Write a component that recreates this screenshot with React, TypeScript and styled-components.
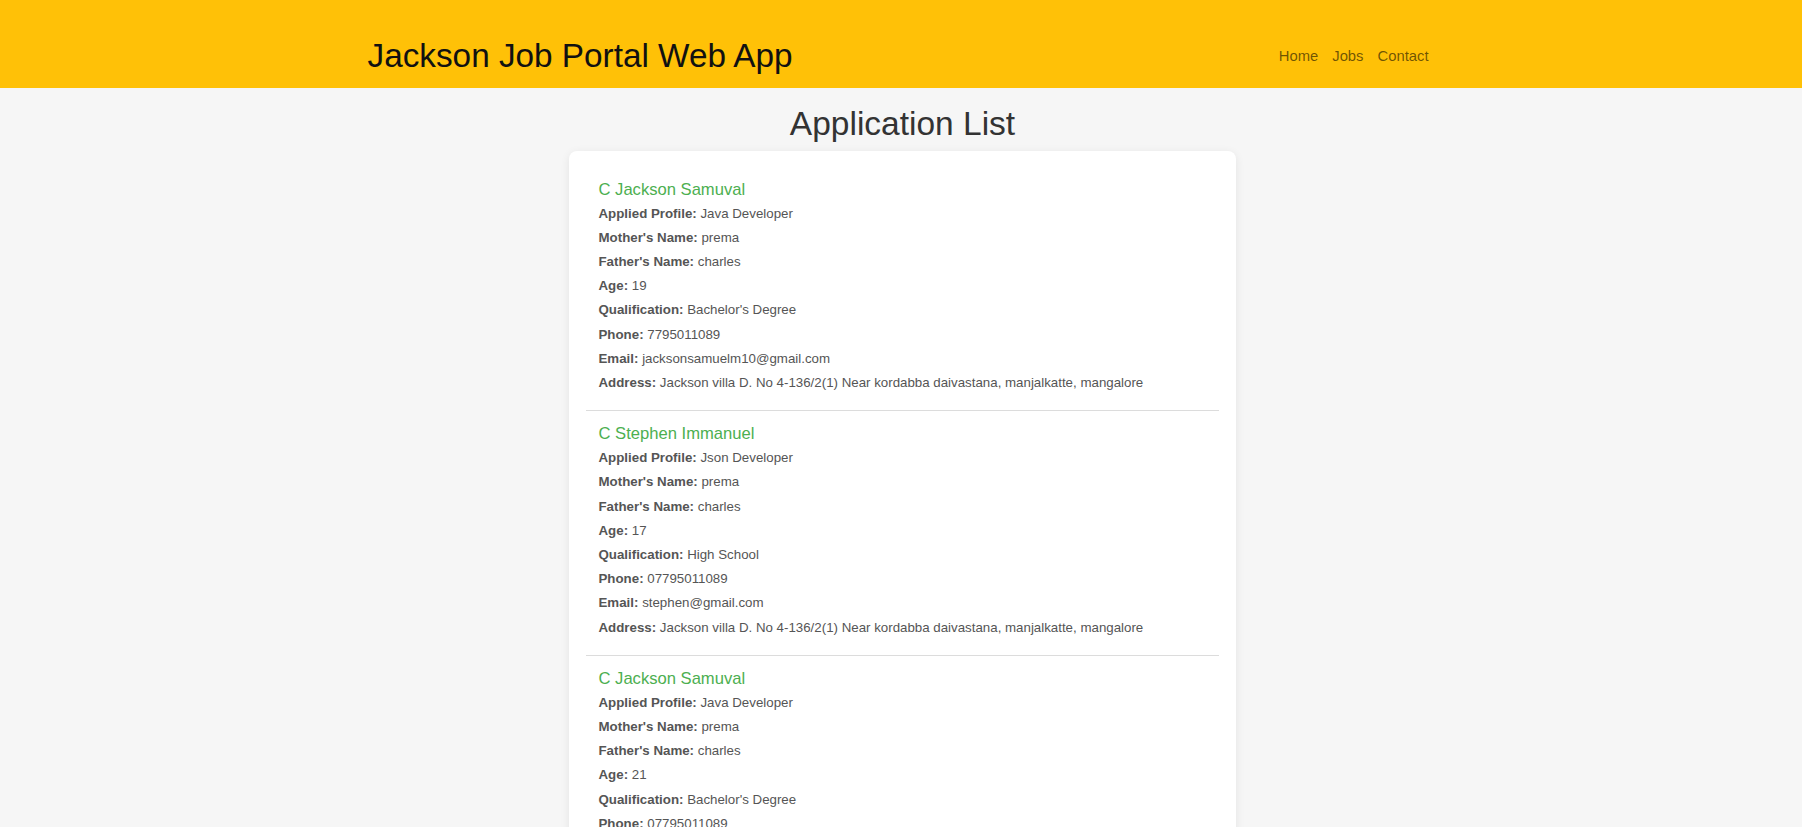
import React from "react";
import styled, { createGlobalStyle } from "styled-components";

const GlobalStyle = createGlobalStyle`
  html, body {
    margin: 0;
    padding: 0;
    background: #f6f6f6;
    font-family: "Liberation Sans", Arial, Helvetica, sans-serif;
  }
  * { box-sizing: border-box; }
`;

const Header = styled.header`
  background: #ffc107;
  height: 88px;
  padding-top: 24px;
`;

const HeaderInner = styled.div`
  max-width: 1069px;
  height: 64px;
  margin: 0 auto;
  display: flex;
  align-items: center;
  justify-content: space-between;
`;

const Brand = styled.h1`
  margin: 0 0 0 1px;
  font-size: 33.3px;
  line-height: 40px;
  font-weight: 400;
  color: #111;
`;

const Nav = styled.nav`
  display: flex;
  align-items: center;
`;

const NavLink = styled.a`
  font-size: 14.8px;
  line-height: 20px;
  padding: 0 7px;
  color: rgba(0, 0, 0, 0.58);
  text-decoration: none;
  cursor: pointer;
`;

const Main = styled.main`
  display: flex;
  flex-direction: column;
  align-items: center;
`;

const PageTitle = styled.h2`
  margin: 16px 0 7px 3px;
  font-size: 33.5px;
  line-height: 39.6px;
  font-weight: 400;
  color: #333;
`;

const Card = styled.section`
  width: 667px;
  margin-left: 2px;
  background: #fff;
  border-radius: 8px;
  box-shadow: 0 2px 10px rgba(0, 0, 0, 0.08);
  padding: 16px 17px;
`;

const Item = styled.div`
  padding: 13px 13px 15px;
  border-bottom: 1px solid #dcdcdc;
`;

const Name = styled.h3`
  margin: 0 0 2px;
  font-size: 16.6px;
  line-height: 20px;
  font-weight: 400;
  color: #4caf50;
`;

const Row = styled.p`
  margin: 0;
  font-size: 13.3px;
  line-height: 24.2px;
  color: #555;
`;

const Label = styled.strong`
  font-weight: 700;
  color: #555;
`;

type Applicant = {
  name: string;
  profile: string;
  mother: string;
  father: string;
  age: number;
  qualification: string;
  phone: string;
  email: string;
  address: string;
};

const applicants: Applicant[] = [
  {
    name: "C Jackson Samuval",
    profile: "Java Developer",
    mother: "prema",
    father: "charles",
    age: 19,
    qualification: "Bachelor's Degree",
    phone: "7795011089",
    email: "jacksonsamuelm10@gmail.com",
    address: "Jackson villa D. No 4-136/2(1) Near kordabba daivastana, manjalkatte, mangalore",
  },
  {
    name: "C Stephen Immanuel",
    profile: "Json Developer",
    mother: "prema",
    father: "charles",
    age: 17,
    qualification: "High School",
    phone: "07795011089",
    email: "stephen@gmail.com",
    address: "Jackson villa D. No 4-136/2(1) Near kordabba daivastana, manjalkatte, mangalore",
  },
  {
    name: "C Jackson Samuval",
    profile: "Java Developer",
    mother: "prema",
    father: "charles",
    age: 21,
    qualification: "Bachelor's Degree",
    phone: "07795011089",
    email: "jacksonsamuelm10@gmail.com",
    address: "Jackson villa D. No 4-136/2(1) Near kordabba daivastana, manjalkatte, mangalore",
  },
];

const Field: React.FC<{ label: string; value: React.ReactNode }> = ({ label, value }) => (
  <Row>
    <Label>{label}:</Label> {value}
  </Row>
);

export default function App() {
  return (
    <>
      <GlobalStyle />
      <Header>
        <HeaderInner>
          <Brand>Jackson Job Portal Web App</Brand>
          <Nav>
            <NavLink>Home</NavLink>
            <NavLink>Jobs</NavLink>
            <NavLink>Contact</NavLink>
          </Nav>
        </HeaderInner>
      </Header>
      <Main>
        <PageTitle>Application List</PageTitle>
        <Card>
          {applicants.map((a, i) => (
            <Item key={i}>
              <Name>{a.name}</Name>
              <Field label="Applied Profile" value={a.profile} />
              <Field label="Mother's Name" value={a.mother} />
              <Field label="Father's Name" value={a.father} />
              <Field label="Age" value={a.age} />
              <Field label="Qualification" value={a.qualification} />
              <Field label="Phone" value={a.phone} />
              <Field label="Email" value={a.email} />
              <Field label="Address" value={a.address} />
            </Item>
          ))}
        </Card>
      </Main>
    </>
  );
}
